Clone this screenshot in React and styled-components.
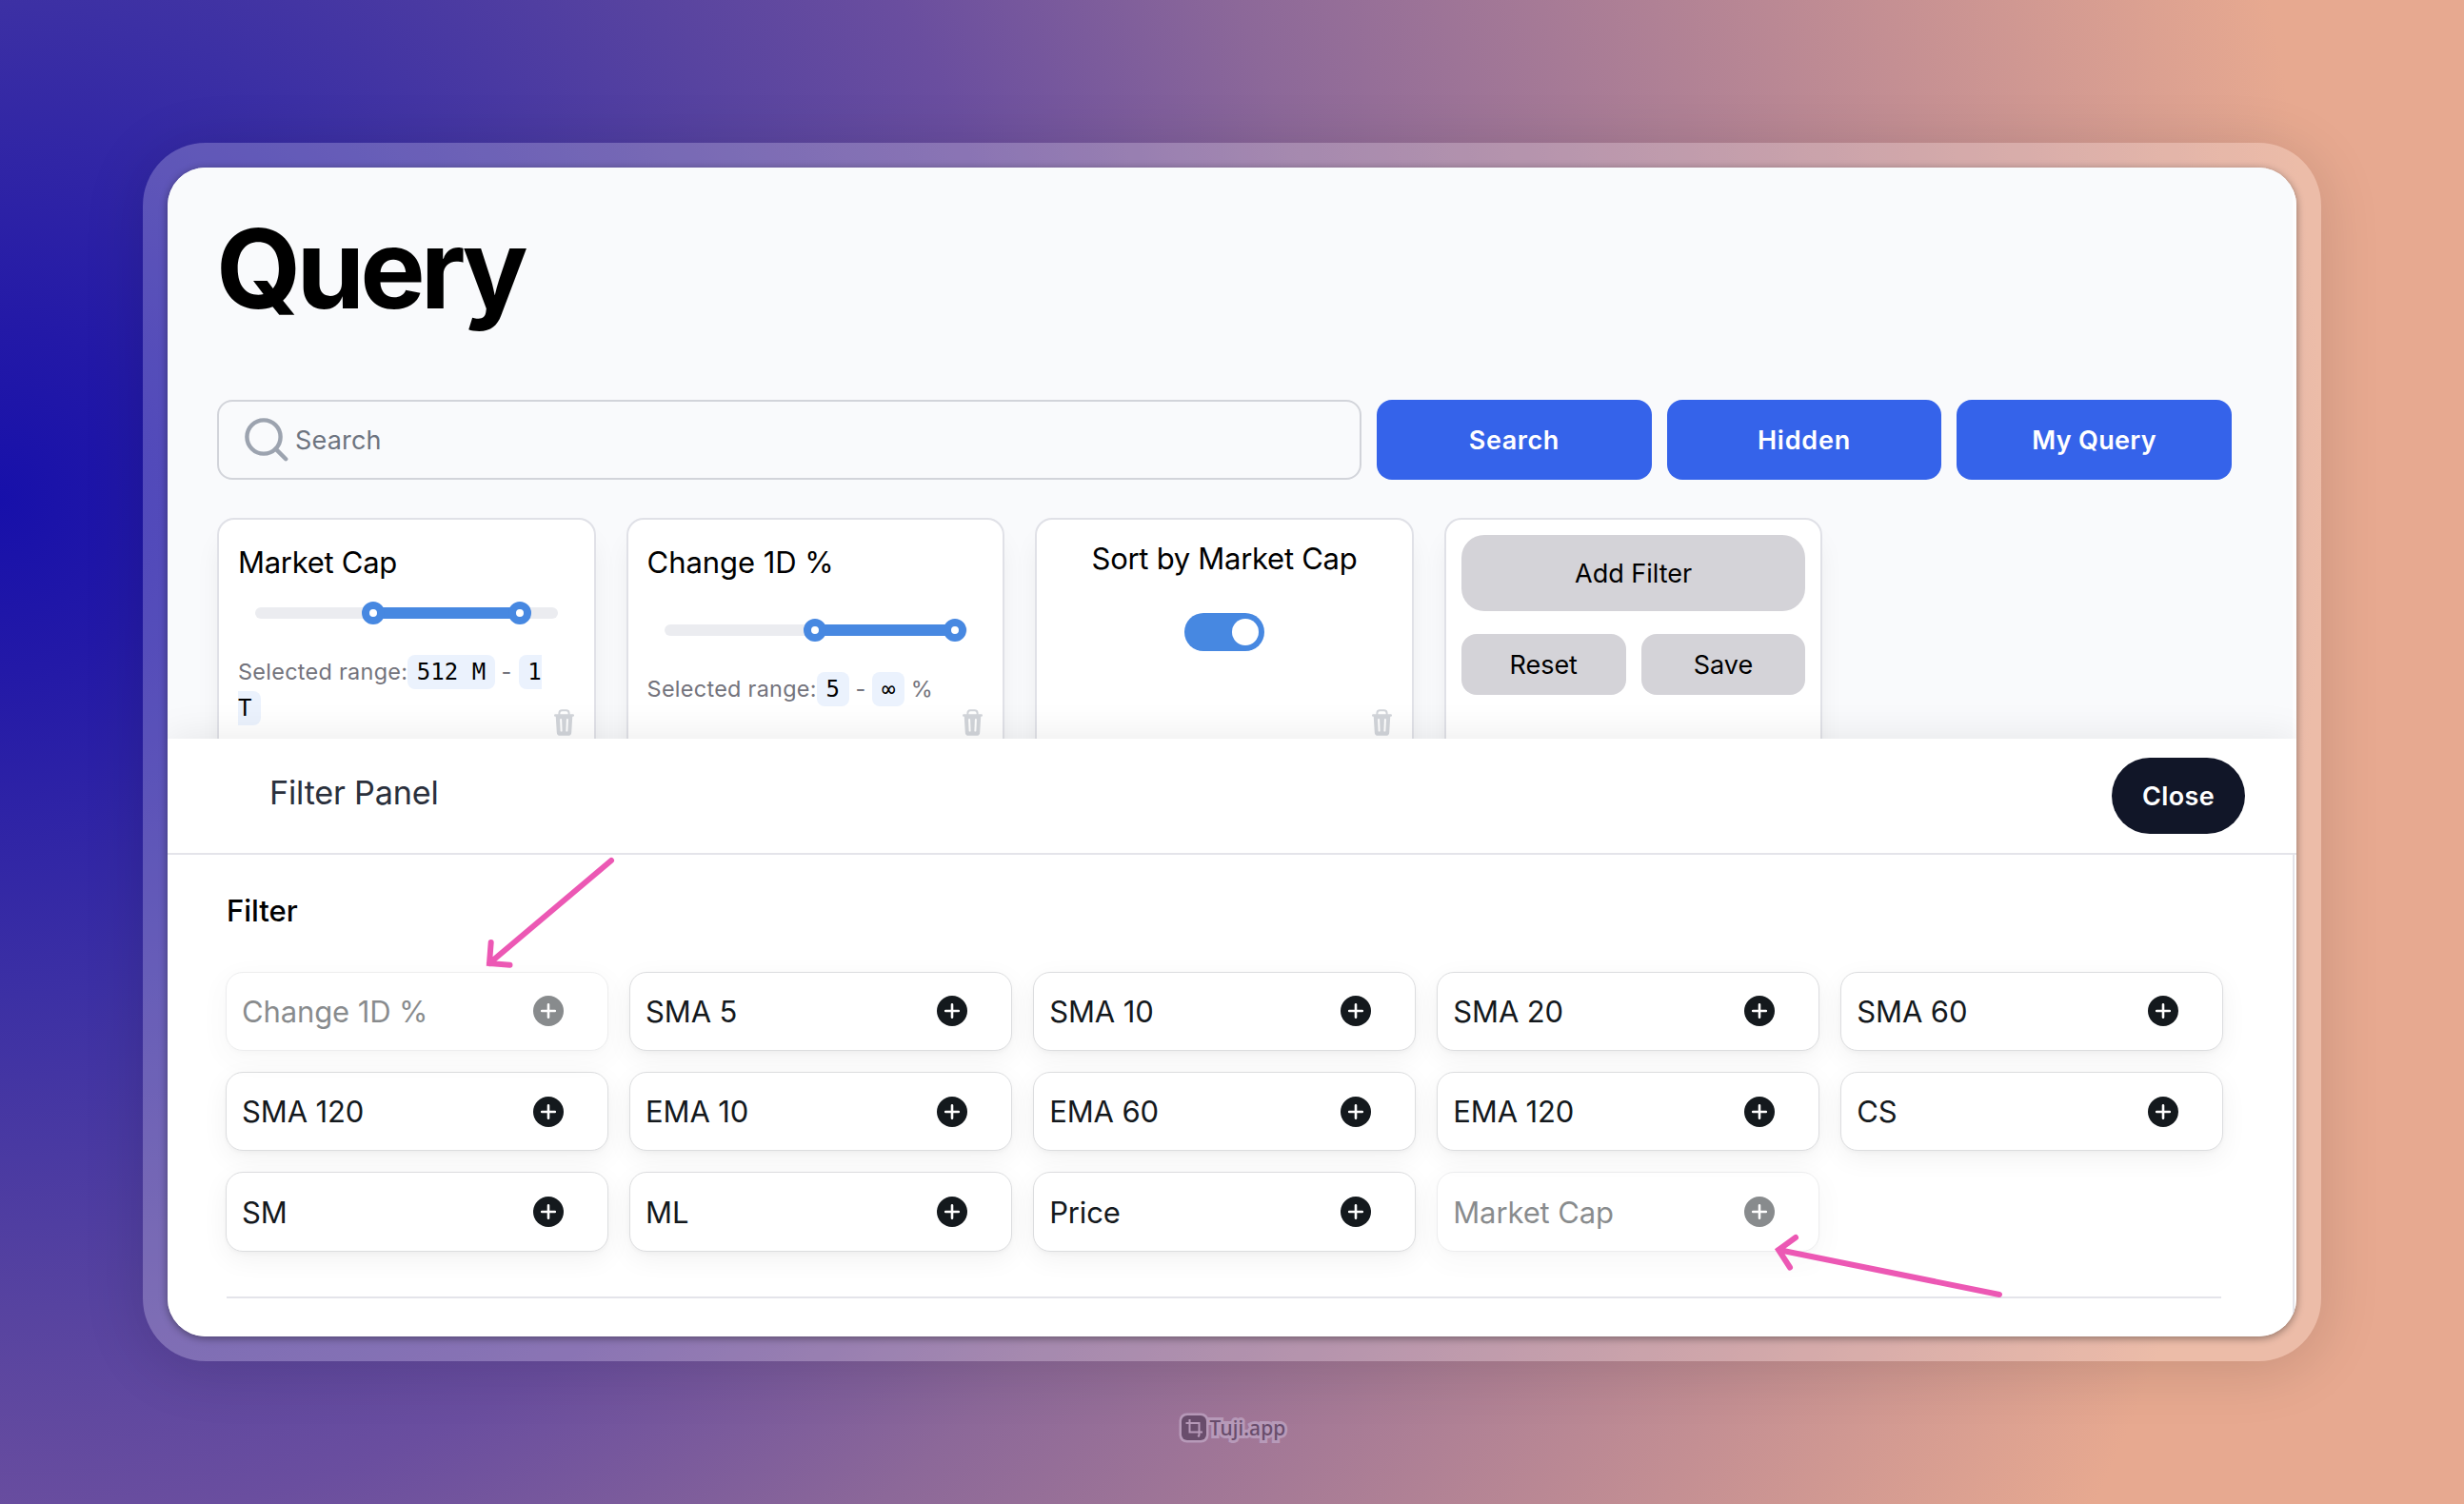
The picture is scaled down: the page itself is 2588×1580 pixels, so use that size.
import React from "react";
import styled, { createGlobalStyle, css } from "styled-components";

const Global = createGlobalStyle`
  * { box-sizing: border-box; }
  body {
    margin: 0;
    font-family: Inter, "Liberation Sans", sans-serif;
    -webkit-font-smoothing: antialiased;
  }
  button, input { font-family: inherit; }
`;

const Backdrop = styled.div`
  width: 2588px;
  height: 1580px;
  padding-top: 150px;
  display: flex;
  flex-direction: column;
  align-items: center;
  overflow: hidden;
  background: radial-gradient(
    circle at 0 525px,
    #1710aa 0,
    #2319a7 180px,
    #3c30a4 520px,
    #5743a0 850px,
    #6a4e9f 1080px,
    #8c6899 1400px,
    #a67a96 1700px,
    #c48f93 2040px,
    #e7a990 2440px,
    #e7a990 2700px
  );
`;

const Ring = styled.div`
  position: relative;
  flex: none;
  width: 2288px;
  height: 1280px;
  padding: 26px;
  border-radius: 66px;
  background: rgba(255, 255, 255, 0.22);
  box-shadow: 0 8px 64px rgba(0, 0, 0, 0.14);
`;

const Window = styled.main`
  height: 1228px;
  border-radius: 40px;
  overflow: hidden;
  background: #fff;
  box-shadow: 0 2px 8px rgba(0, 0, 0, 0.4);
  display: flex;
  flex-direction: column;
`;

const QueryPage = styled.section`
  height: 600px;
  flex: none;
  padding: 49px 64px 0 52px;
  background: #f9fafc;
  border-right: 4px solid #fdfdfe;
`;

const Title = styled.h1`
  margin: 0 0 0 -1px;
  font-size: 115px;
  line-height: 116px;
  font-weight: 700;
  letter-spacing: -4.9px;
  color: #000;
`;

const SearchRow = styled.div`
  margin-top: 79px;
  height: 84px;
  display: grid;
  grid-template-columns: 1202px 1fr 1fr 1fr;
  gap: 16px;
`;

const SearchBox = styled.label`
  display: flex;
  align-items: center;
  gap: 7px;
  padding-left: 27px;
  border: 2px solid #d2d4da;
  border-radius: 16px;
`;

const SearchInput = styled.input`
  flex: 1;
  border: 0;
  padding: 0;
  outline: none;
  background: transparent;
  font-size: 27px;
  letter-spacing: 0.17px;
  &::placeholder { color: #6d7480; opacity: 1; }
`;

const PrimaryButton = styled.button`
  border: 0;
  border-radius: 16px;
  background: #3563ea;
  color: #fff;
  font-size: 27px;
  font-weight: 600;
  letter-spacing: ${(p) => p.$track || "0.55px"};
`;

const Cards = styled.div`
  margin-top: 40px;
  display: grid;
  grid-template-columns: repeat(5, 1fr);
  gap: 32px;
`;

const Card = styled.article`
  position: relative;
  height: 260px;
  padding: ${(p) => p.$pad};
  border: 2px solid #e0e1e7;
  border-radius: 18px;
  background: #fff;
  box-shadow: 0 20px 30px -6px rgba(0, 0, 0, 0.08);
  display: flex;
  flex-direction: column;
`;

const CardTitle = styled.h2`
  margin: 0;
  font-size: 31px;
  line-height: 48px;
  font-weight: 400;
  letter-spacing: ${(p) => p.$track || "-0.28px"};
  text-align: ${(p) => (p.$center ? "center" : "left")};
  color: #000;
`;

const SliderBox = styled.div`
  margin: ${(p) => p.$top}px 17.6px 0 18px;
  height: 24px;
  display: flex;
  align-items: center;
`;

const Rail = styled.div`
  flex: 1;
  height: 12px;
  border-radius: 6px;
  background: #ebecf0;
  display: flex;
  align-items: center;
`;

const Span = styled.div`
  height: 12px;
  background: #4788e1;
  display: flex;
  align-items: center;
  justify-content: space-between;
`;

const Thumb = styled.i`
  flex: none;
  width: 24px;
  height: 24px;
  margin: 0 -12px;
  border: 8px solid #4788e1;
  border-radius: 50%;
  background: #fff;
`;

const RangeText = styled.p`
  margin: 30.7px 0 0;
  font-size: 23.4px;
  line-height: 37px;
  letter-spacing: 0.3px;
  color: #73737c;
`;

const Code = styled.code`
  padding: 3.5px 9.6px 4.5px;
  border-radius: 8px;
  background: #ebf2fd;
  color: #000;
  font-family: "DejaVu Sans Mono", monospace;
  font-size: 24px;
  letter-spacing: 0;
`;

const DeleteButton = styled.button`
  position: absolute;
  right: 21px;
  top: 199px;
  padding: 0;
  border: 0;
  background: none;
  display: flex;
`;

const Switch = styled.div`
  align-self: center;
  margin-top: 33.3px;
  width: 84px;
  height: 40px;
  padding: 6px;
  border-radius: 20px;
  background: #4788e1;
  display: flex;
  justify-content: flex-end;
`;

const Knob = styled.span`
  width: 28px;
  height: 28px;
  border-radius: 50%;
  background: #fff;
`;

const GrayButton = styled.button`
  border: 0;
  height: ${(p) => (p.$large ? 80 : 64)}px;
  flex: ${(p) => (p.$large ? "none" : 1)};
  border-radius: ${(p) => (p.$large ? 24 : 16)}px;
  background: #d4d3d8;
  color: #000;
  font-size: 27px;
  font-weight: 400;
`;

const ButtonPair = styled.div`
  margin-top: 24px;
  display: flex;
  gap: 16px;
`;

const Panel = styled.section`
  position: relative;
  flex: 1;
  display: flex;
  flex-direction: column;
  background: #fff;
  box-shadow: 0 0 40px rgba(0, 0, 0, 0.09);
`;

const PanelHeader = styled.header`
  height: 122px;
  padding: 0 54px 0 107px;
  border-bottom: 2px solid #e4e4ea;
  display: flex;
  align-items: center;
  justify-content: space-between;
`;

const PanelTitle = styled.h2`
  margin: 0;
  padding-bottom: 8px;
  font-size: 34.2px;
  font-weight: 400;
  letter-spacing: -0.2px;
  color: #2a303c;
`;

const CloseButton = styled.button`
  width: 140px;
  height: 80px;
  border: 0;
  border-radius: 40px;
  background: #111628;
  color: #fff;
  font-size: 27px;
  font-weight: 600;
  letter-spacing: 0.4px;
`;

const PanelBody = styled.div`
  flex: 1;
  margin-right: 2px;
  padding: 38.7px 0 0 61px;
  border-right: 2px solid #e4e4ea;
`;

const GroupTitle = styled.h3`
  margin: 0 0 0 1px;
  font-size: 31px;
  line-height: 40px;
  font-weight: 500;
  color: #000;
`;

const FilterGrid = styled.div`
  margin-top: 44px;
  width: 2098px;
  display: grid;
  grid-template-columns: repeat(5, 1fr);
  grid-auto-rows: 83.4px;
  gap: 22px 22.4px;
`;

const Chip = styled.button`
  padding: 0 46px 0 16px;
  border: 1px solid #dcdddf;
  border-radius: 18px;
  background: #fff;
  box-shadow: 0 8px 28px rgba(0, 0, 0, 0.055), 0 2px 4px rgba(0, 0, 0, 0.03);
  display: flex;
  align-items: center;
  justify-content: space-between;
  font-size: 31px;
  letter-spacing: -0.12px;
  color: #14191d;
  ${(p) => p.disabled && css`opacity: 0.5;`}
`;

const Divider = styled.hr`
  margin: 47px 0 0 1px;
  width: 2095px;
  height: 2px;
  border: 0;
  background: #e4e4ea;
`;

const Annotations = styled.svg`
  position: absolute;
  left: 0;
  top: 0;
  pointer-events: none;
`;

const Watermark = styled.footer`
  margin-top: 52px;
  height: 36px;
  display: flex;
  align-items: center;
  gap: 1px;
`;

const Brand = styled.span`
  font: 500 21px/30px "Noto Sans", sans-serif;
  letter-spacing: 0.1px;
  color: #694d6c;
  -webkit-text-stroke: 6px #b79ab9;
  paint-order: stroke fill;
`;

function MagnifierIcon() {
  return (
    <svg width="46" height="46" viewBox="0 0 46 46" fill="none" stroke="#9ca3af" strokeWidth="4.4" strokeLinecap="round">
      <circle cx="20" cy="20" r="17.6" />
      <path d="M32.6 32.6 43.2 43.2" />
    </svg>
  );
}

function TrashIcon() {
  return (
    <svg width="21" height="28" viewBox="0 0 21 28">
      <path d="M1.2 6.5H19.8" stroke="#d2d5da" strokeWidth="2.4" strokeLinecap="round" />
      <path d="M5.4 6V4.2C5.4 2.4 6.6 1.3 8.3 1.3h4.4c1.7 0 2.9 1.1 2.9 2.9V6" fill="none" stroke="#d2d5da" strokeWidth="2" />
      <path d="M1.7 7h17.6l-1.1 17.4a3.6 3.6 0 0 1-3.6 3.4H6.4a3.6 3.6 0 0 1-3.6-3.4z" fill="#d2d5da" />
      <path d="M7.1 11l.5 11.6M13.9 11l-.5 11.6" stroke="#fff" strokeWidth="2" strokeLinecap="round" />
    </svg>
  );
}

function PlusIcon() {
  return (
    <svg width="32" height="32" viewBox="0 0 32 32">
      <circle cx="16" cy="16" r="16" fill="#14191d" />
      <path d="M16 9.2v13.6M9.2 16h13.6" stroke="#fff" strokeWidth="2.6" strokeLinecap="round" />
    </svg>
  );
}

function CropLogo() {
  return (
    <svg width="32" height="32" viewBox="0 0 32 32">
      <rect x="0.5" y="0.5" width="31" height="31" rx="8" fill="#b79ab9" />
      <rect x="3" y="3" width="26" height="26" rx="6" fill="#694d6c" />
      <path d="M7.5 11H21.5V24M11.5 7V20.5H25" fill="none" stroke="#b79ab9" strokeWidth="2" />
      <circle cx="21" cy="24.6" r="1.2" fill="#b79ab9" />
    </svg>
  );
}

function Slider({ top, from, to }) {
  return (
    <SliderBox $top={top}>
      <Rail>
        <Span style={{ marginLeft: `${from}%`, width: `${to - from}%` }}>
          <Thumb />
          <Thumb />
        </Span>
      </Rail>
    </SliderBox>
  );
}

function Delete() {
  return (
    <DeleteButton aria-label="Delete">
      <TrashIcon />
    </DeleteButton>
  );
}

const filters = [
  "Change 1D %", "SMA 5", "SMA 10", "SMA 20", "SMA 60",
  "SMA 120", "EMA 10", "EMA 60", "EMA 120", "CS",
  "SM", "ML", "Price", "Market Cap",
];
const active = new Set(["Change 1D %", "Market Cap"]);

export default function App() {
  return (
    <>
      <Global />
      <Backdrop>
        <Ring>
          <Window>
            <QueryPage>
              <Title>Query</Title>
              <SearchRow>
                <SearchBox>
                  <MagnifierIcon />
                  <SearchInput placeholder="Search" />
                </SearchBox>
                <PrimaryButton>Search</PrimaryButton>
                <PrimaryButton $track="0.8px">Hidden</PrimaryButton>
                <PrimaryButton $track="0.3px">My Query</PrimaryButton>
              </SearchRow>
              <Cards>
                <Card $pad="20.7px 20px 0">
                  <CardTitle>Market Cap</CardTitle>
                  <Slider top={17.3} from={39} to={87.4} />
                  <RangeText>
                    Selected range:<Code>512 M</Code> - <Code>1 T</Code>
                  </RangeText>
                  <Delete />
                </Card>
                <Card $pad="20.7px 20px 0">
                  <CardTitle $track="-0.05px">Change 1D %</CardTitle>
                  <Slider top={35.3} from={49.7} to={96} />
                  <RangeText>
                    Selected range:<Code>5</Code> - <Code>∞</Code> %
                  </RangeText>
                  <Delete />
                </Card>
                <Card $pad="16.7px 20px 0">
                  <CardTitle $center>Sort by Market Cap</CardTitle>
                  <Switch role="switch" aria-checked="true">
                    <Knob />
                  </Switch>
                  <Delete />
                </Card>
                <Card $pad="16px">
                  <GrayButton $large>Add Filter</GrayButton>
                  <ButtonPair>
                    <GrayButton>Reset</GrayButton>
                    <GrayButton>Save</GrayButton>
                  </ButtonPair>
                </Card>
              </Cards>
            </QueryPage>
            <Panel>
              <PanelHeader>
                <PanelTitle>Filter Panel</PanelTitle>
                <CloseButton>Close</CloseButton>
              </PanelHeader>
              <PanelBody>
                <GroupTitle>Filter</GroupTitle>
                <FilterGrid>
                  {filters.map((name) => (
                    <Chip key={name} disabled={active.has(name)}>
                      {name}
                      <PlusIcon />
                    </Chip>
                  ))}
                </FilterGrid>
                <Divider />
              </PanelBody>
            </Panel>
          </Window>
          <Annotations width="2288" height="1280" viewBox="150 150 2288 1280" fill="none" stroke="#ec58b4" strokeWidth="6" strokeLinecap="round">
            <path d="M642 904 514 1012M515.7 990 514 1012 535.5 1013.7" />
            <path d="M2100 1360 1868 1313M1886 1300 1868 1313 1880 1331.5" />
          </Annotations>
        </Ring>
        <Watermark>
          <CropLogo />
          <Brand>Tuji.app</Brand>
        </Watermark>
      </Backdrop>
    </>
  );
}
